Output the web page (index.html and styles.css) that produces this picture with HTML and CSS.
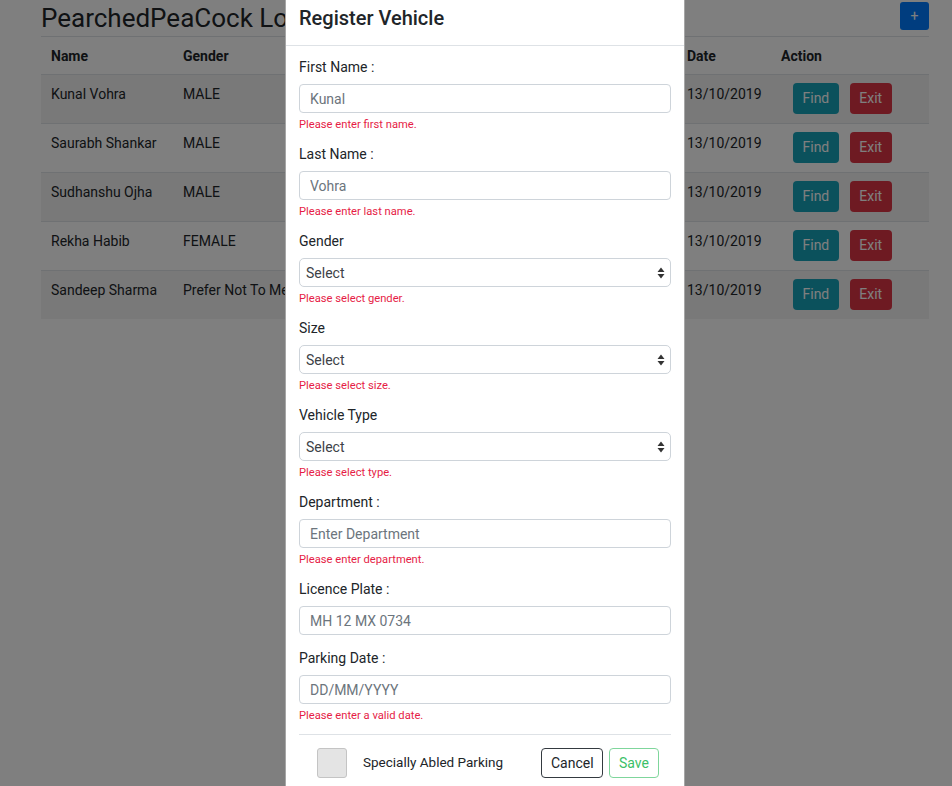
FILE: index.html
```html
<!DOCTYPE html>
<html lang="en">
<head>
<meta charset="utf-8">
<title>PearchedPeaCock Lot</title>
<link rel="stylesheet" href="styles.css">
</head>
<body>
<div class="page">
  <div class="topbar">
    <h3 class="title">PearchedPeaCock Lot</h3>
    <button class="add">+</button>
  </div>
  <table class="grid">
    <colgroup>
      <col class="c-name"><col class="c-gender"><col class="c-hidden"><col class="c-date"><col class="c-action">
    </colgroup>
    <thead>
      <tr><th>Name</th><th>Gender</th><th></th><th>Date</th><th>Action</th></tr>
    </thead>
    <tbody>
      <tr class="odd"><td>Kunal Vohra</td><td>MALE</td><td></td><td>13/10/2019</td><td class="act"><button class="btn find">Find</button><button class="btn exit">Exit</button></td></tr>
      <tr><td>Saurabh Shankar</td><td>MALE</td><td></td><td>13/10/2019</td><td class="act"><button class="btn find">Find</button><button class="btn exit">Exit</button></td></tr>
      <tr class="odd"><td>Sudhanshu Ojha</td><td>MALE</td><td></td><td>13/10/2019</td><td class="act"><button class="btn find">Find</button><button class="btn exit">Exit</button></td></tr>
      <tr><td>Rekha Habib</td><td>FEMALE</td><td></td><td>13/10/2019</td><td class="act"><button class="btn find">Find</button><button class="btn exit">Exit</button></td></tr>
      <tr class="odd"><td>Sandeep Sharma</td><td class="clip">Prefer Not To Mention</td><td></td><td>13/10/2019</td><td class="act"><button class="btn find">Find</button><button class="btn exit">Exit</button></td></tr>
    </tbody>
  </table>
</div>

<div class="backdrop"></div>

<div class="modal">
  <div class="modal-header">
    <h5 class="modal-title">Register Vehicle</h5>
  </div>
  <div class="modal-body">
    <div class="group">
      <label class="lbl">First Name :</label>
      <input class="field" type="text" placeholder="Kunal">
      <div class="err">Please enter first name.</div>
    </div>
    <div class="group">
      <label class="lbl">Last Name :</label>
      <input class="field" type="text" placeholder="Vohra">
      <div class="err">Please enter last name.</div>
    </div>
    <div class="group">
      <label class="lbl">Gender</label>
      <div class="select-wrap">
        <select class="field sel"><option>Select</option></select>
        <svg class="arrows" width="8" height="12" viewBox="0 0 8 12"><path d="M4 0.5 L7.5 5 L0.5 5 Z M4 11.5 L7.5 7 L0.5 7 Z" fill="#333"/></svg>
      </div>
      <div class="err">Please select gender.</div>
    </div>
    <div class="group">
      <label class="lbl">Size</label>
      <div class="select-wrap">
        <select class="field sel"><option>Select</option></select>
        <svg class="arrows" width="8" height="12" viewBox="0 0 8 12"><path d="M4 0.5 L7.5 5 L0.5 5 Z M4 11.5 L7.5 7 L0.5 7 Z" fill="#333"/></svg>
      </div>
      <div class="err">Please select size.</div>
    </div>
    <div class="group">
      <label class="lbl">Vehicle Type</label>
      <div class="select-wrap">
        <select class="field sel"><option>Select</option></select>
        <svg class="arrows" width="8" height="12" viewBox="0 0 8 12"><path d="M4 0.5 L7.5 5 L0.5 5 Z M4 11.5 L7.5 7 L0.5 7 Z" fill="#333"/></svg>
      </div>
      <div class="err">Please select type.</div>
    </div>
    <div class="group">
      <label class="lbl">Department :</label>
      <input class="field" type="text" placeholder="Enter Department">
      <div class="err">Please enter department.</div>
    </div>
    <div class="group plain">
      <label class="lbl">Licence Plate :</label>
      <input class="field" type="text" placeholder="MH 12 MX 0734">
    </div>
    <div class="group">
      <label class="lbl">Parking Date :</label>
      <input class="field" type="text" placeholder="DD/MM/YYYY">
      <div class="err">Please enter a valid date.</div>
    </div>
    <div class="footer">
      <span class="check"></span>
      <span class="check-label">Specially Abled Parking</span>
      <div class="actions">
        <button class="fbtn cancel">Cancel</button>
        <button class="fbtn save">Save</button>
      </div>
    </div>
  </div>
</div>
</body>
</html>
```

FILE: styles.css
```css
* { box-sizing: border-box; }

html, body {
  margin: 0;
  padding: 0;
  background: #ffffff;
  font-family: Roboto, "Liberation Sans", Arial, sans-serif;
  color: #212529;
  font-size: 14px;
  overflow: hidden;
}

.page {
  padding: 0 23px 0 41px;
}

.topbar {
  display: flex;
  justify-content: space-between;
  align-items: flex-start;
  height: 36px;
}

.title {
  margin: 1px 0 0 0;
  font-size: 26px;
  font-weight: 400;
  line-height: 34px;
  white-space: nowrap;
}

.add {
  margin-top: 2px;
  width: 29px;
  height: 28px;
  border: none;
  border-radius: 3px;
  background: #007bff;
  color: #ffffff;
  font-family: inherit;
  font-size: 14px;
  line-height: 28px;
  padding: 0;
}

.grid {
  width: 888px;
  border-collapse: collapse;
  table-layout: fixed;
}

.c-name { width: 132px; }
.c-gender { width: 112px; }
.c-hidden { width: 392px; }
.c-date { width: 94px; }
.c-action { width: 158px; }

.grid th {
  text-align: left;
  font-weight: 700;
  padding: 9px 10px 8px;
  line-height: 20px;
  border-top: 1px solid #dee2e6;
  border-bottom: 1px solid #dee2e6;
  white-space: nowrap;
  overflow: hidden;
}

.grid td {
  padding: 9px 10px 8px;
  line-height: 20px;
  vertical-align: top;
  border-top: 1px solid #dee2e6;
  white-space: nowrap;
  overflow: hidden;
}

.grid td.clip {
  padding-right: 0;
}

.grid td.act {
  padding: 8px 10px 9px 22px;
}

.grid tbody tr:first-child td {
  border-top: none;
}

.grid tr.odd td {
  background: rgba(0, 0, 0, 0.05);
}

.btn {
  height: 31px;
  padding: 0 9.5px;
  border: none;
  border-radius: 4px;
  color: #ffffff;
  font-family: inherit;
  font-size: 14px;
  line-height: 31px;
  vertical-align: top;
}

.find { background: #17a2b8; }
.exit { background: #dc3545; margin-left: 11px; }

.backdrop {
  position: fixed;
  inset: 0;
  background: rgba(0, 0, 0, 0.5);
}

.modal {
  position: fixed;
  left: 285px;
  top: 0;
  width: 400px;
  height: 800px;
  background: #ffffff;
  border-left: 1px solid rgba(0, 0, 0, 0.35);
  border-right: 1px solid rgba(0, 0, 0, 0.35);
}

.modal-header {
  padding: 3px 13px 12px;
  border-bottom: 1px solid #dee2e6;
}

.modal-title {
  margin: 0;
  font-size: 20px;
  font-weight: 500;
  line-height: 30px;
}

.modal-body {
  padding: 11px 13px 0;
}

.group {
  display: flex;
  flex-direction: column;
  margin-bottom: 13px;
}

.group.plain {
  margin-bottom: 13px;
}

.lbl {
  line-height: 20px;
  margin-bottom: 7px;
  font-size: 14px;
}

.field {
  width: 100%;
  height: 29px;
  border: 1px solid #ced4da;
  border-radius: 4px;
  padding: 0 10px;
  font-family: inherit;
  font-size: 14px;
  color: #495057;
  background: #ffffff;
  outline: none;
}

.field::placeholder {
  color: #6c757d;
}

.select-wrap {
  position: relative;
}

.sel {
  appearance: none;
  -webkit-appearance: none;
  padding: 0 6px;
  border-radius: 5px;
  color: #3d4247;
}

.arrows {
  position: absolute;
  right: 6px;
  top: 9px;
}

.err {
  margin-top: 6px;
  font-size: 11.2px;
  line-height: 12px;
  color: #e61d46;
}

.footer {
  display: flex;
  align-items: center;
  border-top: 1px solid #dee2e6;
  padding-top: 13px;
  margin-top: -1px;
}

.check {
  width: 30px;
  height: 30px;
  margin-left: 18px;
  border: 1px solid #c4c4c4;
  border-radius: 3px;
  background: #e4e4e4;
}

.check-label {
  margin-left: 16px;
  font-size: 13.5px;
  margin-top: -2px;
}

.actions {
  margin-left: auto;
  margin-right: 12px;
  display: flex;
  gap: 6px;
}

.fbtn {
  height: 30px;
  padding: 0 8.5px;
  border-radius: 4px;
  background: #ffffff;
  font-family: inherit;
  font-size: 14px;
  line-height: 28px;
}

.cancel {
  border: 1px solid #343a40;
  color: #212529;
}

.save {
  padding: 0 9px;
  border: 1px solid #7fd69c;
  color: #3cbf68;
}
```
